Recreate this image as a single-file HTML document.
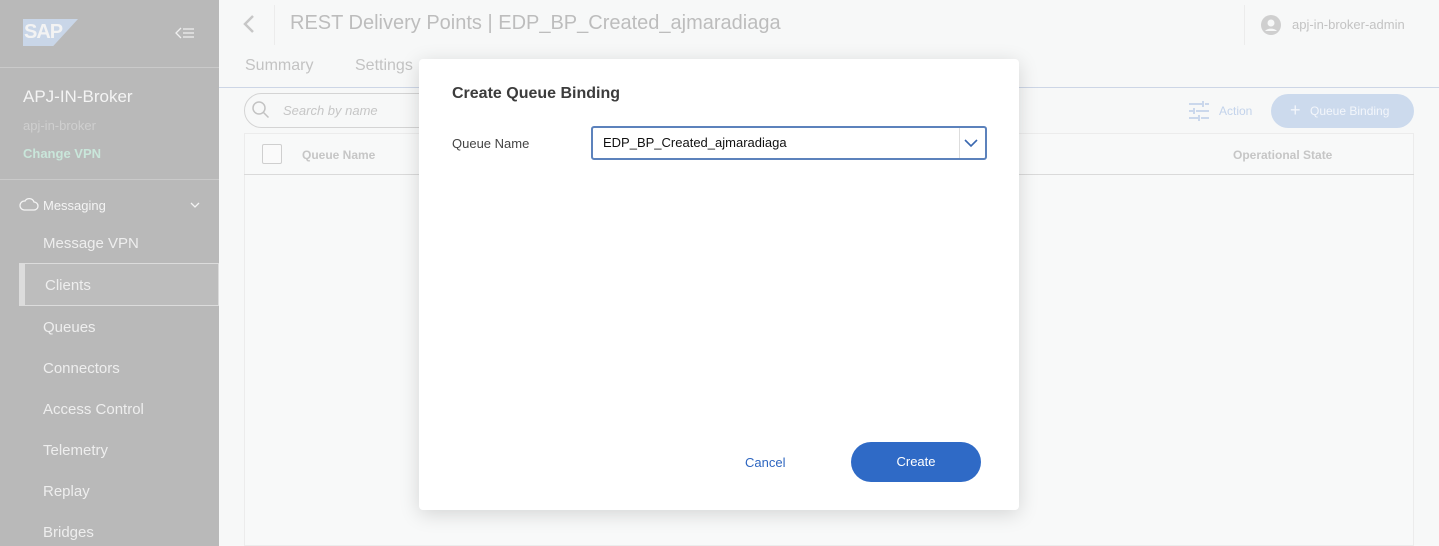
<!DOCTYPE html>
<html><head><meta charset="utf-8"><style>
*{box-sizing:border-box;margin:0;padding:0}
body{width:1439px;height:546px;overflow:hidden;background:#f7f8f8;font-family:"Liberation Sans",sans-serif;position:relative}
.sb{position:absolute;left:0;top:0;width:219px;height:546px;background:#b9b9b9;color:#ededed}
.sb .t{position:absolute;left:43px;font-size:15px;color:#eeeeee}
.abs{position:absolute}
</style></head><body>
<div class="sb">
  <div class="abs" style="left:23px;top:19px;width:55px;height:27px;background:#c9d6e8;clip-path:polygon(0 0,100% 0,55% 100%,0 100%)"></div>
  <div class="abs" style="left:24px;top:21px;font:bold 20px 'Liberation Sans';color:#f3f3f3;letter-spacing:-1px">SAP</div>
  <svg class="abs" style="left:175px;top:26px" width="20" height="14"><path d="M6 2L1 7l5 5" fill="none" stroke="#f0f0f0" stroke-width="1.3"/><path d="M8 3h11M8 7h11M8 11h11" stroke="#f0f0f0" stroke-width="1.3"/></svg>
  <div class="abs" style="left:0;top:67px;width:219px;height:1px;background:#cacaca"></div>
  <div class="abs" style="left:23px;top:87px;font-size:17px;color:#f4f4f4">APJ-IN-Broker</div>
  <div class="abs" style="left:23px;top:118px;font-size:13px;color:#cfcfcf">apj-in-broker</div>
  <div class="abs" style="left:23px;top:146px;font-size:13px;font-weight:bold;color:#c9e6da">Change VPN</div>
  <div class="abs" style="left:0;top:179px;width:219px;height:1px;background:#cacaca"></div>
  <svg class="abs" style="left:19px;top:197px" width="20" height="14" viewBox="0 0 20 14"><path d="M5 13h10a4 4 0 0 0 0-8 5 5 0 0 0-9-1A4.5 4.5 0 0 0 5 13z" fill="none" stroke="#f4f4f4" stroke-width="1.3"/></svg>
  <div class="abs" style="left:43px;top:198px;font-size:13px;color:#f4f4f4">Messaging</div>
  <svg class="abs" style="left:190px;top:202px" width="10" height="6"><path d="M1 1l4 4 4-4" fill="none" stroke="#f4f4f4" stroke-width="1.3"/></svg>
  <div class="t" style="top:235px">Message VPN</div>
  <div class="abs" style="left:19px;top:263px;width:200px;height:43px;border:1px solid #dcdcdc;border-left:6px solid #dcdcdc;background:#bdbdbd"></div>
  <div class="t" style="left:45px;top:277px">Clients</div>
  <div class="t" style="top:319px">Queues</div>
  <div class="t" style="top:360px">Connectors</div>
  <div class="t" style="top:401px">Access Control</div>
  <div class="t" style="top:442px">Telemetry</div>
  <div class="t" style="top:483px">Replay</div>
  <div class="t" style="top:524px">Bridges</div>
</div>
<svg class="abs" style="left:242px;top:14px" width="14" height="20"><path d="M11 2L3 10l8 8" fill="none" stroke="#c7c7c7" stroke-width="2.5"/></svg>
<div class="abs" style="left:274px;top:5px;width:1px;height:40px;background:#ececec"></div>
<div class="abs" style="left:290px;top:12px;font-size:20px;color:#bdbdbd">REST Delivery Points | EDP_BP_Created_ajmaradiaga</div>
<div class="abs" style="left:1244px;top:5px;width:1px;height:40px;background:#ececec"></div>
<svg class="abs" style="left:1261px;top:15px" width="20" height="20"><circle cx="10" cy="10" r="10" fill="#cfcfcf"/><circle cx="10" cy="8" r="3.5" fill="#f7f8f8"/><path d="M4 16a7 5 0 0 1 12 0" fill="#f7f8f8"/></svg>
<div class="abs" style="left:1292px;top:17px;font-size:13px;color:#c3c3c3">apj-in-broker-admin</div>
<div class="abs" style="left:245px;top:57px;font-size:16px;color:#c3c3c3">Summary</div>
<div class="abs" style="left:355px;top:57px;font-size:16px;color:#c3c3c3">Settings</div>
<div class="abs" style="left:219px;top:87px;width:1220px;height:1px;background:#cdd6e6"></div>
<div class="abs" style="left:244px;top:93px;width:200px;height:35px;border:1px solid #d4d4d4;border-radius:18px"></div>
<svg class="abs" style="left:251px;top:100px" width="20" height="20"><circle cx="8" cy="8" r="6" fill="none" stroke="#c3c3c3" stroke-width="1.5"/><path d="M12.5 12.5l5 5" stroke="#c3c3c3" stroke-width="1.5"/></svg>
<div class="abs" style="left:283px;top:103px;font-size:13px;font-style:italic;color:#c6c6c6">Search by name</div>
<div class="abs" style="left:244px;top:133px;width:1170px;height:413px;border:1px solid #ececec;background:#f8f9f9"></div>
<div class="abs" style="left:244px;top:174px;width:1170px;height:1px;background:#dadada"></div>
<div class="abs" style="left:262px;top:144px;width:20px;height:20px;border:1px solid #cfcfcf;border-radius:2px;background:#fafafa"></div>
<div class="abs" style="left:302px;top:148px;font-size:12px;font-weight:bold;color:#c6c6c6">Queue Name</div>
<div class="abs" style="left:1233px;top:148px;font-size:12px;font-weight:bold;color:#c6c6c6">Operational State</div>
<svg class="abs" style="left:1188px;top:100px" width="22" height="22"><path d="M1 4h13M17 4h4M15 1v6M1 11h4M8 11h13M6 8v6M1 18h9M13 18h8M11 15v6" stroke="#cbd8ec" stroke-width="2"/></svg>
<div class="abs" style="left:1219px;top:104px;font-size:12px;color:#c3d3eb">Action</div>
<div class="abs" style="left:1271px;top:94px;width:143px;height:34px;border-radius:17px;background:#ccdaed"></div>
<div class="abs" style="left:1290px;top:100px;font-size:18px;color:#f3f6fb">+</div>
<div class="abs" style="left:1310px;top:104px;font-size:12px;color:#f3f6fb">Queue Binding</div>
<div class="abs" style="left:419px;top:59px;width:600px;height:451px;background:#fff;border-radius:4px;box-shadow:0 4px 20px rgba(0,0,0,.15)">
  <div class="abs" style="left:33px;top:26px;font-size:16px;font-weight:bold;color:#3c3c3c">Create Queue Binding</div>
  <div class="abs" style="left:33px;top:77px;font-size:13px;color:#444">Queue Name</div>
  <div class="abs" style="left:172px;top:67px;width:396px;height:34px;border:2px solid #5c82bc;border-radius:3px"></div>
  <div class="abs" style="left:184px;top:76px;font-size:13px;color:#111">EDP_BP_Created_ajmaradiaga</div>
  <div class="abs" style="left:540px;top:69px;width:1px;height:30px;background:#ddd"></div>
  <svg class="abs" style="left:545px;top:79px" width="14" height="10"><path d="M1 2l6 6 6-6" fill="none" stroke="#3a68b0" stroke-width="1.6"/></svg>
  <div class="abs" style="left:326px;top:396px;font-size:13px;color:#2e66c0">Cancel</div>
  <div class="abs" style="left:432px;top:383px;width:130px;height:40px;border-radius:20px;background:#2f6ac6;color:#fff;font-size:13px;text-align:center;line-height:40px">Create</div>
</div>
</body></html>
